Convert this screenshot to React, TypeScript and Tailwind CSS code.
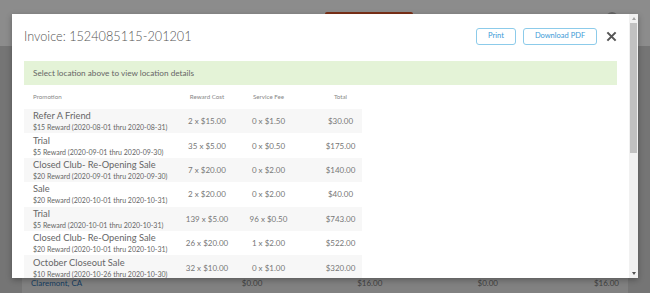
const rows = [
  { name: 'Refer A Friend', sub: '$15 Reward (2020-08-01 thru 2020-08-31)', cost: '2 x $15.00', fee: '0 x $1.50', total: '$30.00' },
  { name: 'Trial', sub: '$5 Reward (2020-09-01 thru 2020-09-30)', cost: '35 x $5.00', fee: '0 x $0.50', total: '$175.00' },
  { name: 'Closed Club- Re-Opening Sale', sub: '$20 Reward (2020-09-01 thru 2020-09-30)', cost: '7 x $20.00', fee: '0 x $2.00', total: '$140.00' },
  { name: 'Sale', sub: '$20 Reward (2020-10-01 thru 2020-10-31)', cost: '2 x $20.00', fee: '0 x $2.00', total: '$40.00' },
  { name: 'Trial', sub: '$5 Reward (2020-10-01 thru 2020-10-31)', cost: '139 x $5.00', fee: '96 x $0.50', total: '$743.00' },
  { name: 'Closed Club- Re-Opening Sale', sub: '$20 Reward (2020-10-01 thru 2020-10-31)', cost: '26 x $20.00', fee: '1 x $2.00', total: '$522.00' },
  { name: 'October Closeout Sale', sub: '$10 Reward (2020-10-26 thru 2020-10-30)', cost: '32 x $10.00', fee: '0 x $1.00', total: '$320.00' },
];

function BackgroundPage() {
  return (
    <div className="flex flex-col h-full bg-[#d5d5d5]">
      <div className="h-[46px] bg-white flex items-start pt-[12px] px-[30px] shrink-0">
        <span className="text-[14px] font-bold text-[#2b7bbd] leading-none w-[295px]">Fresh Vault</span>
        <span className="w-[88px] h-[22px] bg-[#e2582a] rounded-[2px]" />
        <span className="ml-[110px] text-[10px] text-[#666] leading-none">Welcome</span>
        <span className="ml-auto mr-[2px] w-[12px] h-[12px] rounded-full bg-[#bbb]" />
      </div>
      <div className="flex-1 mx-[22px] bg-[#ebebeb] flex flex-col justify-end pb-[3px]">
        <div className="flex items-center h-[14px] text-[8px] text-[#777] px-[9px]">
          <span className="w-[212px] text-[#2a6fb0]">Claremont, CA</span>
          <span className="w-[116px]">$0.00</span>
          <span className="w-[121px]">$16.00</span>
          <span className="w-[117px]">$0.00</span>
          <span>$16.00</span>
        </div>
      </div>
    </div>
  );
}

function Scrollbar() {
  return (
    <div className="w-[9px] bg-[#f1f1f1] flex flex-col shrink-0">
      <div className="h-[9px] flex items-center justify-center">
        <span className="w-0 h-0 border-l-[2.5px] border-r-[2.5px] border-b-[3px] border-l-transparent border-r-transparent border-b-[#a3a3a3]" />
      </div>
      <div className="h-[130px] mx-[1px] bg-[#c1c1c1]" />
      <div className="flex-1" />
      <div className="h-[9px] flex items-center justify-center">
        <span className="w-0 h-0 border-l-[2.5px] border-r-[2.5px] border-t-[3px] border-l-transparent border-r-transparent border-t-[#505050]" />
      </div>
    </div>
  );
}

export default function App() {
  return (
    <div className="relative w-[650px] h-[293px] overflow-hidden font-['Lato','Liberation_Sans',sans-serif]">
      <BackgroundPage />
      <div className="absolute inset-0 bg-black/[0.45]" />
      <div className="absolute left-[12px] top-[14px] w-[626px] h-[264px] bg-white flex shadow-[0_2px_6px_rgba(0,0,0,0.3)]">
        <div className="flex-1 overflow-hidden px-[12px]">
          <div className="h-[44px] flex items-center">
            <h2 className="text-[12.7px] text-[#555] leading-none font-light">Invoice: 1524085115-201201</h2>
            <button className="ml-auto h-[17px] w-[40px] border border-[#8ccbea] rounded-[3px] text-[7.5px] text-[#3d9ad6] bg-white">
              Print
            </button>
            <button className="ml-[7px] h-[17px] w-[74px] border border-[#8ccbea] rounded-[3px] text-[7.5px] text-[#3d9ad6] bg-white">
              Download PDF
            </button>
            <button className="ml-[9px] w-[11px] h-[11px] flex items-center justify-center">
              <svg viewBox="0 0 12 12" className="w-[11px] h-[11px]">
                <path d="M1.5 1.5L10.5 10.5M10.5 1.5L1.5 10.5" stroke="#555" strokeWidth={2.3} strokeLinecap="butt" />
              </svg>
            </button>
          </div>
          <div className="mt-[3px] h-[24px] bg-[#e4f3d7] flex items-center px-[9px] text-[8.2px] text-[#666]">
            Select location above to view location details
          </div>
          <div className="w-[338px]">
            <div className="grid grid-cols-[152px_62px_61px_63px] h-[24px] items-center text-[6.2px] text-[#888]">
              <span className="pl-[9px]">Promotion</span>
              <span className="text-center">Reward Cost</span>
              <span className="text-center">Service Fee</span>
              <span className="text-center pl-[20px]">Total</span>
            </div>
            {rows.map((r, i) => (
              <div
                key={i}
                className={`grid grid-cols-[152px_62px_61px_63px] h-[24.4px] items-center ${i % 2 === 0 ? 'bg-[#f7f7f7]' : 'bg-white'}`}
              >
                <div className="pl-[9px] flex flex-col">
                  <span className="text-[9.3px] leading-[12px] text-[#666] whitespace-nowrap">{r.name}</span>
                  <span className="text-[7px] leading-[10px] text-[#666] whitespace-nowrap">{r.sub}</span>
                </div>
                <span className="text-center text-[8px] text-[#777] whitespace-nowrap">{r.cost}</span>
                <span className="text-center text-[8px] text-[#777] whitespace-nowrap">{r.fee}</span>
                <span className="text-center pl-[20px] text-[8px] text-[#777] whitespace-nowrap">{r.total}</span>
              </div>
            ))}
          </div>
        </div>
        <Scrollbar />
      </div>
    </div>
  );
}
